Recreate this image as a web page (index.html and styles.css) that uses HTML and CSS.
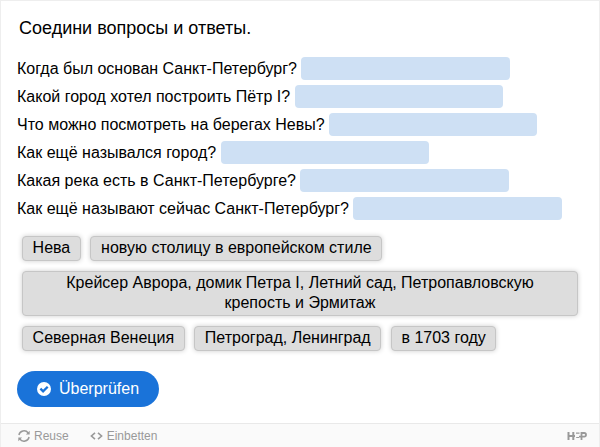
FILE: index.html
```html
<!DOCTYPE html>
<html lang="ru">
<head>
  <meta charset="utf-8">
  <title>Соедини вопросы и ответы</title>
  <link rel="stylesheet" href="styles.css">
</head>
<body>
  <div class="h5p-content">
    <div class="question">
      <div class="introduction">Соедини вопросы и ответы.</div>
      <div class="droparea">
        <div class="line"><span>Когда был основан Санкт-Петербург? </span><span class="dropzone"></span></div>
        <div class="line"><span>Какой город хотел построить Пётр I? </span><span class="dropzone"></span></div>
        <div class="line"><span>Что можно посмотреть на берегах Невы? </span><span class="dropzone"></span></div>
        <div class="line"><span>Как ещё назывался город? </span><span class="dropzone"></span></div>
        <div class="line"><span>Какая река есть в Санкт-Петербурге? </span><span class="dropzone"></span></div>
        <div class="line"><span>Как ещё называют сейчас Санкт-Петербург? </span><span class="dropzone"></span></div>
      </div>
      <div class="draggables">
        <div class="draggable">Нева</div>
        <div class="draggable">новую столицу в европейском стиле</div>
        <div class="draggable long">Крейсер Аврора, домик Петра I, Летний сад, Петропавловскую крепость и Эрмитаж</div>
        <div class="draggable">Северная Венеция</div>
        <div class="draggable">Петроград, Ленинград</div>
        <div class="draggable">в 1703 году</div>
      </div>
      <button class="check" type="button">
        <svg class="check-icon" viewBox="0 0 14 14">
          <circle cx="7" cy="7" r="7" fill="#fff"/>
          <path d="M3.4 6.6 L6.1 9.3 L10.7 4.7" fill="none" stroke="#1a73d9" stroke-width="2.3"/>
        </svg>
        <span>Überprüfen</span>
      </button>
    </div>
    <div class="actions">
      <div class="action reuse">
        <svg class="reuse-icon" viewBox="0 0 12 12" fill="none" stroke="#999" stroke-width="1.4">
          <path d="M0.9 5 A5.2 5.2 0 0 1 10.2 3"/>
          <path d="M11.1 7 A5.2 5.2 0 0 1 1.8 9"/>
          <path d="M11.7 0.8 V4.6 H7.9 Z" fill="#999" stroke="none"/>
          <path d="M0.3 11.2 V7.4 H4.1 Z" fill="#999" stroke="none"/>
        </svg>
        <span>Reuse</span>
      </div>
      <div class="action embed">
        <svg class="embed-icon" viewBox="0 0 13 8" fill="none" stroke="#999" stroke-width="1.6">
          <path d="M5 0.8 L1.4 4 L5 7.2"/>
          <path d="M8 0.8 L11.6 4 L8 7.2"/>
        </svg>
        <span>Einbetten</span>
      </div>
      <svg class="logo" viewBox="0 0 20 10" fill="none" stroke="#999" stroke-width="2">
        <path d="M1.5 1 V9 M6.3 1 V9 M1.5 5 H8"/>
        <path d="M9 2.2 H12.5 M9.2 6.5 H12" stroke-width="1.2"/>
        <path d="M14.5 9 V2 H17.2 A1.8 1.8 0 0 1 17.2 5.6 H12" stroke-width="1.8"/>
      </svg>
    </div>
  </div>
</body>
</html>
```
FILE: styles.css
```css
html, body {
  margin: 0;
  padding: 0;
  height: 100%;
  overflow: hidden;
  font-family: "Liberation Sans", Arial, sans-serif;
}
.h5p-content {
  box-sizing: border-box;
  height: 447px;
  border: 1px solid #eee;
  border-bottom: 0;
  background: #fff;
  color: #000;
  font-size: 16px;
  display: flex;
  flex-direction: column;
}
.question {
  height: 422px;
  padding: 0 16px;
  box-sizing: border-box;
}
.introduction {
  padding: 16px 0 0 2px;
  font-size: 18px;
  line-height: 22px;
}
.droparea {
  padding-top: 15px;
}
.line {
  display: flex;
  align-items: center;
  height: 28px;
  line-height: 18px;
  white-space: pre;
}
.line span:first-child {
  padding-top: 2px;
}
.dropzone {
  width: 208.4px;
  height: 23px;
  border-radius: 4px;
  background: #cee0f4;
}
.draggables {
  display: flex;
  flex-wrap: wrap;
  gap: 9.6px;
  padding: 13.9px 5px 0;
}
.draggable {
  box-sizing: border-box;
  padding: 1.6px 9.6px 1.7px;
  border: 1px solid #c6c6c6;
  border-radius: 4px;
  background: #ddd;
  box-shadow: 0 0 5px rgba(0, 0, 0, 0.2);
  line-height: 20px;
  text-align: center;
}
.long {
  padding-left: 30px;
  padding-right: 30px;
}
.check {
  display: flex;
  align-items: center;
  height: 36px;
  margin: 20px 0 0;
  padding: 0 20px;
  border: 0;
  border-radius: 18px;
  background: #1a73d9;
  color: #fff;
  font-family: inherit;
  font-size: 16px;
}
.check-icon {
  width: 14px;
  height: 14px;
  margin-right: 8px;
}
.actions {
  display: flex;
  align-items: center;
  flex: 1;
  padding: 0 12px 0 17px;
  border-top: 1px solid #e9e9e9;
  background: #fafafa;
  color: #999;
  font-size: 12px;
}
.action {
  display: flex;
  align-items: center;
}
.reuse-icon {
  width: 12px;
  height: 12px;
  margin-right: 4px;
}
.embed {
  margin-left: 21px;
}
.embed-icon {
  width: 13px;
  height: 8px;
  margin-right: 4px;
}
.logo {
  width: 20px;
  height: 10px;
  margin-left: auto;
}
```
